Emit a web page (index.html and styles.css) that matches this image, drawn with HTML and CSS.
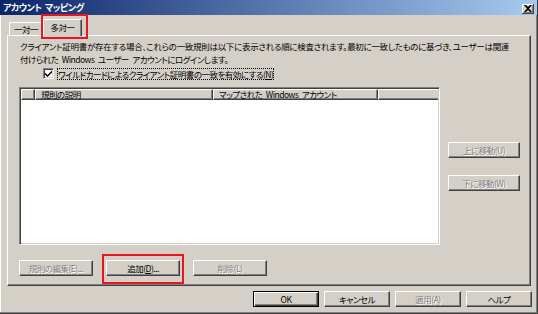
FILE: index.html
```html
<!DOCTYPE html>
<html lang="ja">
<head>
<meta charset="utf-8">
<link rel="stylesheet" href="styles.css">
</head>
<body>
<div class="window">
  <div class="titlebar">
    <span class="title">アカウント マッピング</span>
    <span class="close"><svg width="8" height="7" viewBox="0 0 8 7"><path d="M0 0h2l2 2 2-2h2L5 3.5 8 7H6L4 5 2 7H0l3-3.5z" fill="#000"/></svg></span>
  </div>
  <div class="content">
    <div class="tabs">
      <div class="tab">一対一</div>
      <div class="tab sel">多対一<span class="mark tabmark"></span></div>
    </div>
    <div class="panel">
      <p class="desc"><span class="ln l1">クライアント証明書が存在する場合、これらの一致規則は以下に表示される順に検査されます。最初に一致したものに基づき、ユーザーは関連</span><br><span class="ln l2">付けられた Windows ユーザー アカウントにログインします。</span></p>
      <div class="chk">
        <span class="box"><svg width="7" height="7" viewBox="0 0 7 7"><path d="M0 2.5l2.5 2.5L7 0.5V2.5L2.5 7 0 4.5z" fill="#000"/></svg></span>
        <span class="lbl">ワイルドカードによるクライアント証明書の一致を有効にする(<u>N</u>)</span>
      </div>
      <div class="main">
        <div class="list">
          <div class="hdr">
            <span class="col c1"></span>
            <span class="col c2">規則の説明</span>
            <span class="col c3">マップされた Windows アカウント</span>
            <span class="col c4"></span>
          </div>
        </div>
        <div class="side">
          <span class="btn dis side1">上に移動(U)</span>
          <span class="btn dis side2">下に移動(W)</span>
        </div>
      </div>
      <div class="actions">
        <span class="btn dis a1">規則の編集(E)...</span>
        <span class="btn a2">追加(<u>D</u>)...<span class="mark addmark"></span></span>
        <span class="btn dis a3">削除(L)</span>
      </div>
    </div>
    <div class="footer">
      <span class="btn fbtn def">OK</span>
      <span class="btn fbtn">キャンセル</span>
      <span class="btn fbtn dis">適用(A)</span>
      <span class="btn fbtn">ヘルプ</span>
    </div>
  </div>
</div>
</body>
</html>
```
FILE: styles.css
```css
* { box-sizing: border-box; }
html, body { margin: 0; padding: 0; background: #D4D0C8; }
body {
  font-family: "Noto Sans CJK JP", "Liberation Sans", sans-serif;
  font-size: 8.5px;
  font-feature-settings: "palt";
  letter-spacing: -0.5px;
  word-spacing: 2px;
  color: #000;
}
.window {
  width: 538px; height: 314px;
  background: #D4D0C8;
  border-right: 1px solid #404040;
  border-bottom: 1px solid #404040;
  box-shadow: inset -1px -1px #808080, inset 1px 0 #fff;
  display: flex; flex-direction: column;
  overflow: hidden;
}
.titlebar {
  height: 15px;
  background: linear-gradient(to right, #0A246A, #A6CAF0);
  display: flex; align-items: center; justify-content: space-between;
  padding: 0 3px 0 3px;
  flex: none;
}
.title { color: #fff; font-weight: bold; font-size: 9px; line-height: 15px; letter-spacing: -0.5px; }
.close {
  width: 12px; height: 10px;
  background: #D4D0C8;
  border-right: 1px solid #404040; border-bottom: 1px solid #404040;
  box-shadow: inset 1px 1px #fff, inset -1px -1px #808080;
  display: flex; align-items: center; justify-content: center;
  margin-top: 2px;
}
.content { padding: 4px 3px 0 7px; display: flex; flex-direction: column; flex: 1; }
.tabs { display: flex; align-items: flex-end; padding-left: 2px; height: 16px; position: relative; z-index: 2; }
.tab {
  width: 34px; height: 13px;
  border-top: 1px solid #fff; border-left: 1px solid #fff;
  border-right: 1px solid #404040;
  box-shadow: inset -1px 0 #808080;
  text-align: center; line-height: 12px;
  border-radius: 1px 1px 0 0;
  background: #D4D0C8;
  white-space: nowrap;
}
.tab.sel {
  width: 39px; height: 17px; margin-bottom: -1px; line-height: 15px;
  position: relative;
}
.mark { position: absolute; border: 2px solid #E8161E; pointer-events: none; }
.tabmark { left: -3px; top: -6px; width: 47px; height: 25px; }
.panel {
  width: 524px; height: 251px;
  border-top: 1px solid #fff; border-left: 1px solid #fff;
  border-right: 1px solid #404040; border-bottom: 1px solid #404040;
  box-shadow: inset -1px -1px #808080;
  display: flex; flex-direction: column;
}
.desc { margin: 4px 0 0 12px; line-height: 13px; white-space: nowrap; }
.l1 { letter-spacing: -0.3px; }
.chk { display: flex; align-items: center; margin: 1px 0 0 35px; height: 13px; }
.box {
  width: 11px; height: 11px; background: #fff;
  border-top: 1px solid #808080; border-left: 1px solid #808080;
  border-right: 1px solid #fff; border-bottom: 1px solid #fff;
  box-shadow: inset 1px 1px #404040, inset -1px -1px #D4D0C8;
  display: flex; align-items: center; justify-content: center;
  flex: none;
}
.lbl { margin-left: 3px; padding: 0 1px; outline: 1px dotted #000; outline-offset: -1px; line-height: 12px; }
.main { display: flex; margin-top: 7px; }
.list {
  margin-left: 11px; width: 421px; height: 158px; background: #fff;
  border-top: 1px solid #808080; border-left: 1px solid #808080;
  border-right: 1px solid #fff; border-bottom: 1px solid #fff;
  box-shadow: inset 1px 1px #404040, inset -1px -1px #D4D0C8;
  padding: 1px;
}
.hdr { display: flex; height: 11px; }
.col {
  height: 11px; background: #D4D0C8;
  border-top: 1px solid #fff; border-left: 1px solid #fff;
  border-right: 1px solid #404040; border-bottom: 1px solid #404040;
  box-shadow: inset -1px -1px #808080;
  line-height: 9px; padding-left: 5px; white-space: nowrap; overflow: hidden;
}
.c1 { width: 14px; }
.c2 { width: 178px; }
.c3 { width: 165px; }
.c4 { flex: 1; border-right: none; box-shadow: inset 0 -1px #808080; }
.side { display: flex; flex-direction: column; margin-left: 8px; }
.btn {
  display: flex; align-items: center; justify-content: center;
  height: 16px; background: #D4D0C8;
  border-top: 1px solid #fff; border-left: 1px solid #fff;
  border-right: 1px solid #404040; border-bottom: 1px solid #404040;
  box-shadow: inset -1px -1px #808080;
  white-space: nowrap; position: relative;
}
.btn.dis { color: #808080; text-shadow: 1px 1px #fff; }
.side .btn { width: 72px; }
.side1 { margin-top: 55px; }
.side2 { margin-top: 17px; }
.actions { display: flex; gap: 13px; margin: 15px 0 0 11px; }
.actions .btn { width: 74px; }
.addmark { left: -5px; top: -7px; width: 82px; height: 30px; }
.footer { display: flex; justify-content: flex-end; gap: 5px; margin-top: 5px; padding-right: 2px; }
.fbtn { width: 66px; }
.btn.def { border: 1px solid #000; box-shadow: inset 1px 1px #fff, inset -1px -1px #404040, inset -2px -2px #808080; }
```
